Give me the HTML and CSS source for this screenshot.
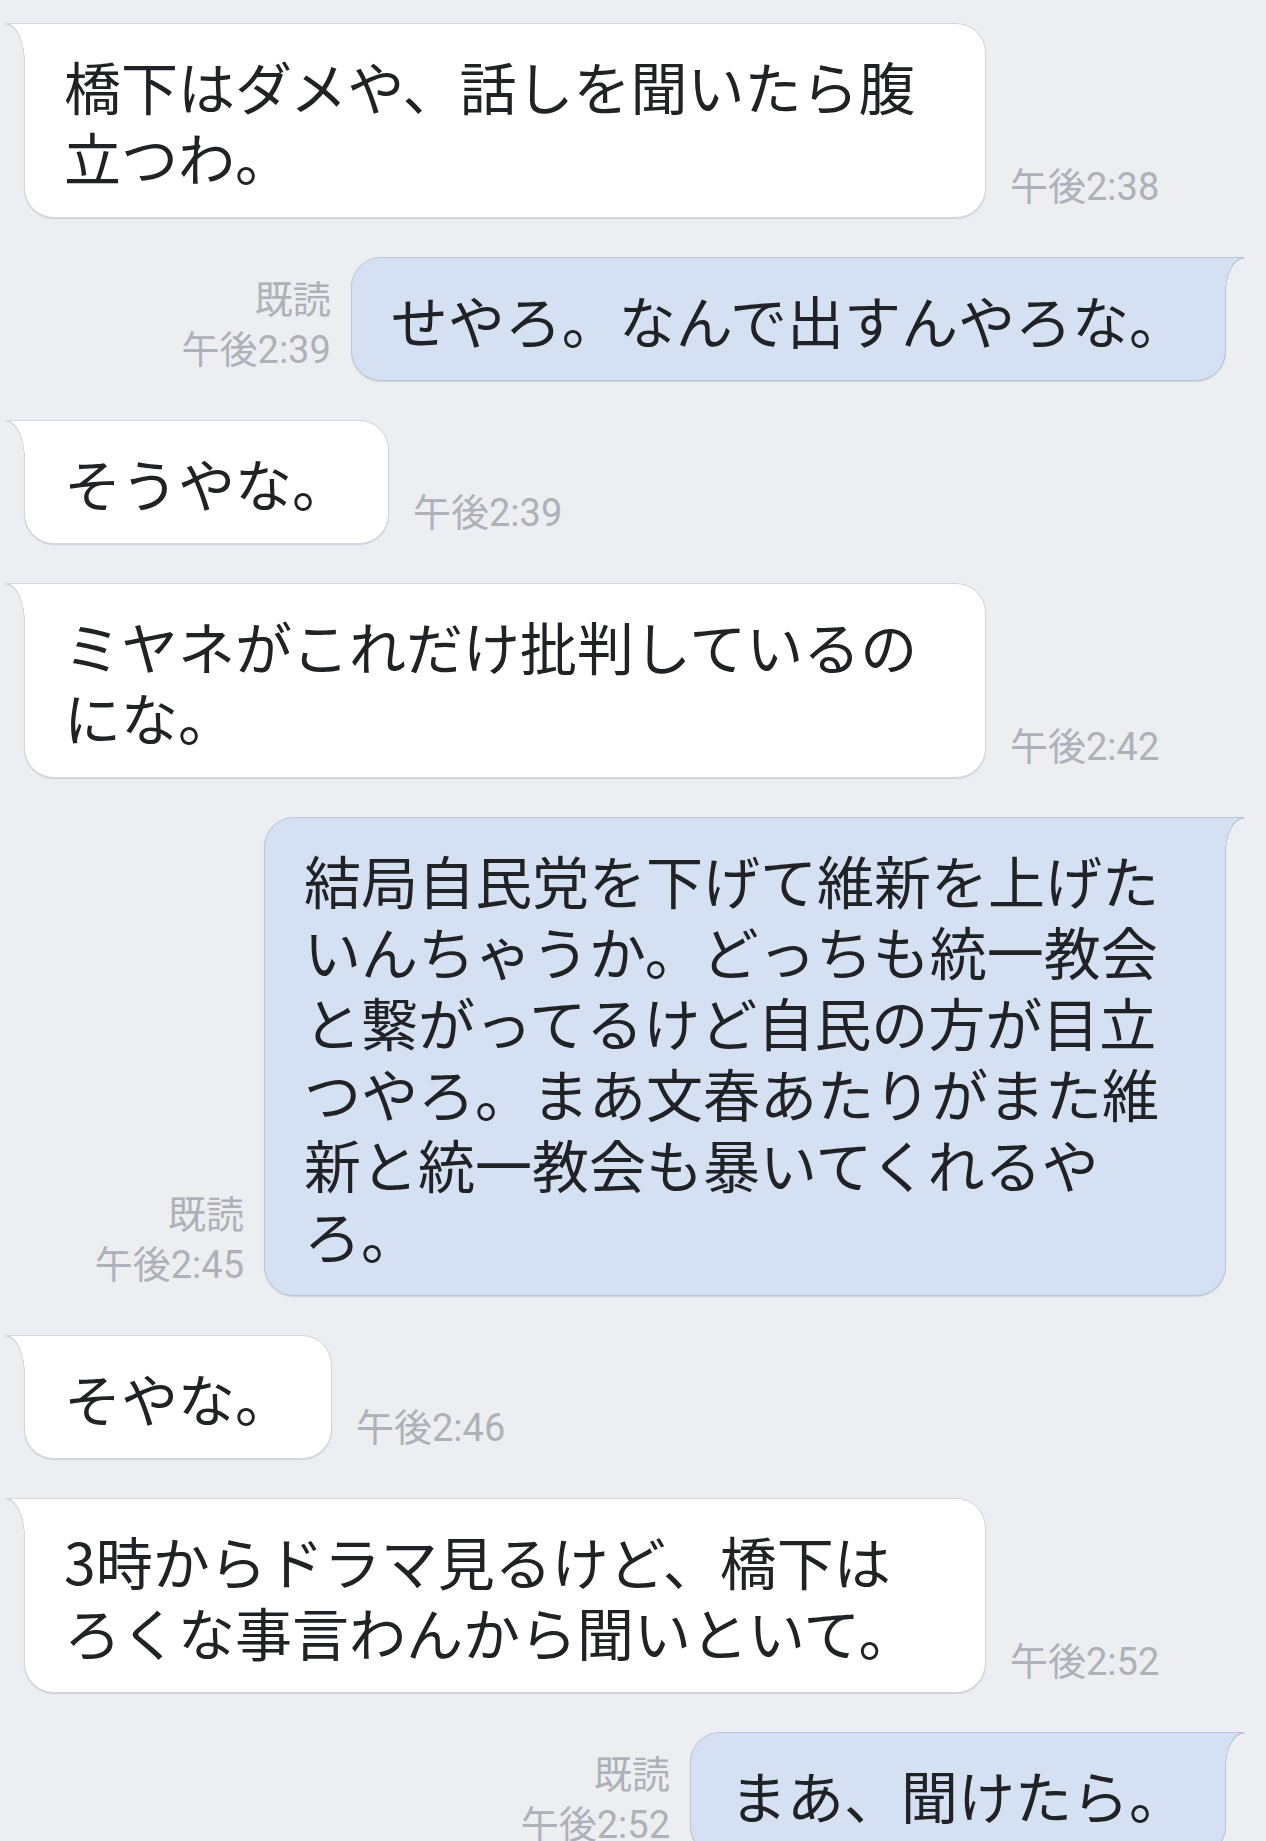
FILE: index.html
```html
<!DOCTYPE html>
<html lang="ja">
<head>
<meta charset="utf-8">
<title>トーク</title>
<link rel="stylesheet" href="styles.css">
</head>
<body>
<div class="chat">
  <div class="row in">
    <div class="bubble">橋下はダメや、話しを聞いたら腹立つわ。</div>
    <div class="meta"><span>午後2:38</span></div>
  </div>
  <div class="row out">
    <div class="meta"><span>既読</span><span>午後2:39</span></div>
    <div class="bubble">せやろ。なんで出すんやろな。</div>
  </div>
  <div class="row in">
    <div class="bubble">そうやな。</div>
    <div class="meta"><span>午後2:39</span></div>
  </div>
  <div class="row in">
    <div class="bubble">ミヤネがこれだけ批判しているのにな。</div>
    <div class="meta"><span>午後2:42</span></div>
  </div>
  <div class="row out">
    <div class="meta"><span>既読</span><span>午後2:45</span></div>
    <div class="bubble">結局自民党を下げて維新を上げたいんちゃうか。どっちも統一教会と繋がってるけど自民の方が目立つやろ。まあ文春あたりがまた維新と統一教会も暴いてくれるやろ。</div>
  </div>
  <div class="row in">
    <div class="bubble">そやな。</div>
    <div class="meta"><span>午後2:46</span></div>
  </div>
  <div class="row in">
    <div class="bubble">3時からドラマ見るけど、橋下はろくな事言わんから聞いといて。</div>
    <div class="meta"><span>午後2:52</span></div>
  </div>
  <div class="row out">
    <div class="meta"><span>既読</span><span>午後2:52</span></div>
    <div class="bubble">まあ、聞けたら。</div>
  </div>
</div>
</body>
</html>
```
FILE: styles.css
```css
html, body {
  margin: 0;
  padding: 0;
  background: #eceef2;
}

.chat {
  height: 1841px;
  overflow: hidden;
  box-sizing: border-box;
  padding: 23px 40px 0 24px;
  display: flex;
  flex-direction: column;
  gap: 39px;
  font-family: Roboto, "Noto Sans CJK JP", sans-serif;
}

.row {
  display: flex;
  align-items: flex-end;
}

.row.in {
  justify-content: flex-start;
  gap: 24px;
}

.row.out {
  justify-content: flex-end;
  gap: 20px;
}

.bubble {
  position: relative;
  box-sizing: border-box;
  max-width: 962px;
  padding: 25.5px 39px;
  font-family: "Noto Sans CJK JP", sans-serif;
  font-size: 57px;
  line-height: 71px;
  color: #212226;
  border: 1px solid #d3d6dc;
  box-shadow: 0 1px 1px rgba(120, 126, 140, 0.25);
}

.row.in .bubble {
  background: #ffffff;
  border-radius: 0 30px 30px 30px;
}

.row.out .bubble {
  background: #d5e0f3;
  border-color: #b9c5d9;
  border-radius: 30px 0 30px 30px;
}

.row.in .bubble::before {
  content: "";
  position: absolute;
  top: -1px;
  left: -19px;
  width: 20px;
  height: 40px;
  background:
    linear-gradient(#d3d6dc, #d3d6dc) top / 100% 1px no-repeat,
    radial-gradient(19px 40px at 0 100%, transparent 94%, #d3d6dc 96%, #d3d6dc 99%, #ffffff 100%);
}

.row.out .bubble::before {
  content: "";
  position: absolute;
  top: -1px;
  right: -19px;
  width: 20px;
  height: 36px;
  background:
    linear-gradient(#b9c5d9, #b9c5d9) top / 100% 1px no-repeat,
    radial-gradient(19px 36px at 100% 100%, transparent 94%, #b9c5d9 96%, #b9c5d9 99%, #d5e0f3 100%);
}

.meta {
  display: flex;
  flex-direction: column;
  flex-shrink: 0;
  margin-bottom: 6px;
  font-size: 38px;
  line-height: 50px;
  color: #aeb1b8;
  white-space: nowrap;
}

.row.out .meta {
  align-items: flex-end;
}
```
